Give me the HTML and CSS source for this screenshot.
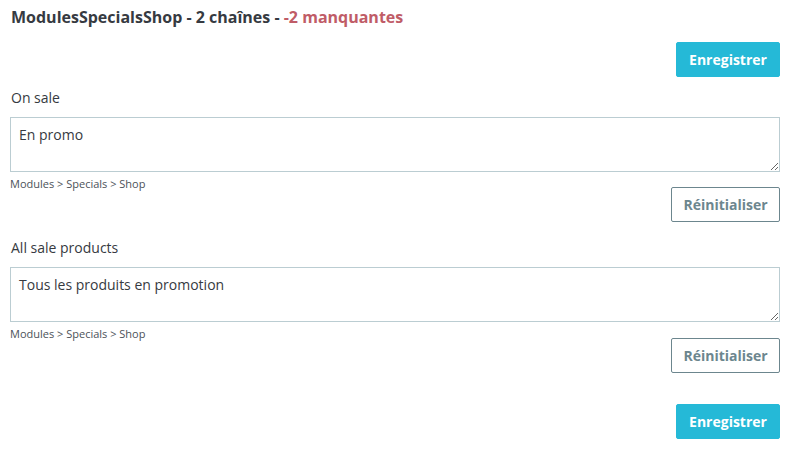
FILE: index.html
```html
<!DOCTYPE html>
<html lang="fr">
<head>
<meta charset="utf-8">
<title>ModulesSpecialsShop</title>
<link rel="stylesheet" href="styles.css">
</head>
<body>
<div class="page">
  <h3 class="title">ModulesSpecialsShop - 2 chaînes - <span class="missing">-2 manquantes</span></h3>
  <div class="actions top">
    <button class="btn btn-primary">Enregistrer</button>
  </div>
  <div class="group first">
    <label class="label">On sale</label>
    <textarea class="field">En promo</textarea>
    <div class="help">Modules &gt; Specials &gt; Shop</div>
    <div class="actions reset">
      <button class="btn btn-outline">Réinitialiser</button>
    </div>
  </div>
  <div class="group second">
    <label class="label">All sale products</label>
    <textarea class="field">Tous les produits en promotion</textarea>
    <div class="help">Modules &gt; Specials &gt; Shop</div>
    <div class="actions reset">
      <button class="btn btn-outline">Réinitialiser</button>
    </div>
  </div>
  <div class="actions bottom">
    <button class="btn btn-primary">Enregistrer</button>
  </div>
</div>
</body>
</html>
```
FILE: styles.css
```css
* { box-sizing: border-box; }
html, body { margin: 0; padding: 0; background: #fff; }
body {
  font-family: "Open Sans", "Liberation Sans", sans-serif;
  color: #363a41;
  font-size: 14px;
  line-height: 20px;
}
.page {
  padding: 6px 13px 0 10px;
}
.title {
  margin: 0 0 0 1px;
  font-size: 16px;
  line-height: 22px;
  font-weight: 700;
  color: #363a41;
}
.missing { color: #c05c67; }
.actions {
  display: flex;
  justify-content: flex-end;
}
.actions.top { margin-top: 14px; }
.btn {
  font-family: "Open Sans", "Liberation Sans", sans-serif;
  font-size: 14px;
  font-weight: 700;
  line-height: 19px;
  border-radius: 0;
  cursor: pointer;
}
.btn-primary {
  width: 104px;
  height: 35px;
  background: #25b9d7;
  color: #fff;
  border: 1px solid #25b9d7;
  border-radius: 2px;
}
.btn-outline {
  width: 109px;
  height: 35px;
  background: #fff;
  color: #6c868e;
  border: 1px solid #6c868e;
  border-radius: 2px;
}
.group { display: flex; flex-direction: column; }
.group.first { margin-top: 10px; }
.group.second { margin-top: 15px; }
.label {
  display: block;
  margin-left: 1px;
  padding-top: 1px;
  font-size: 14px;
  line-height: 20px;
}
.field {
  display: block;
  margin-top: 9px;
  width: 100%;
  height: 55px;
  padding: 7px 8px 3px;
  border: 1px solid #bbcdd2;
  border-radius: 0;
  font-family: "Open Sans", "Liberation Sans", sans-serif;
  font-size: 14px;
  line-height: 20px;
  color: #363a41;
  background: #fff;
}
.help {
  margin-top: 6px;
  font-size: 11px;
  line-height: 11px;
  color: #4b5259;
}
.actions.reset { margin-top: -2px; }
.group.second .actions.reset { margin-top: -1px; }
.actions.bottom { margin-top: 31px; }
```
